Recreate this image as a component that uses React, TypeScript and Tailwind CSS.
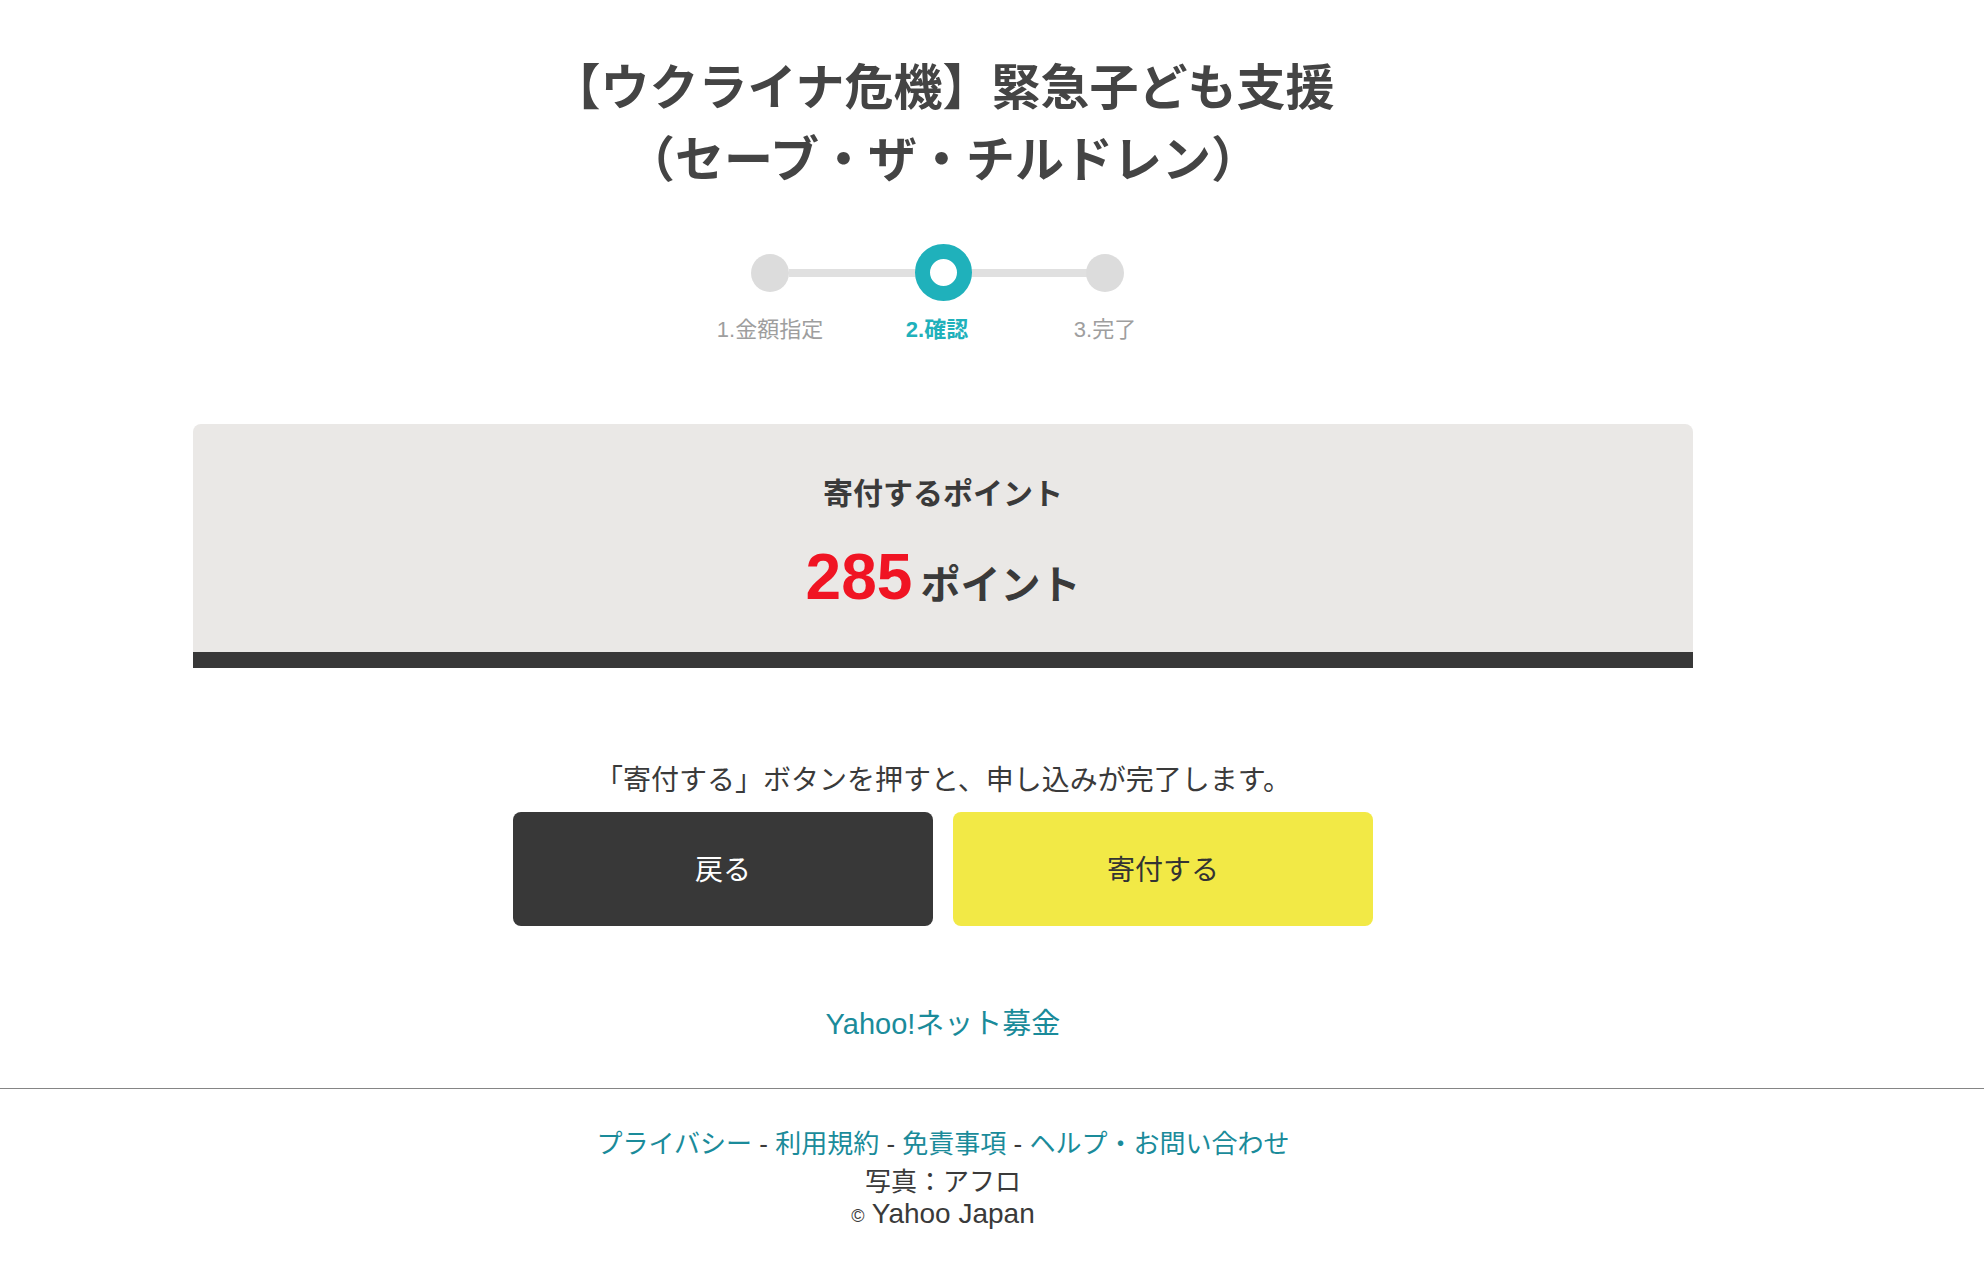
import React from "react";

const steps = [
  { label: "1.金額指定", active: false },
  { label: "2.確認", active: true },
  { label: "3.完了", active: false },
];

function Step({ label, active }: { label: string; active: boolean }) {
  return (
    <div className="flex flex-col items-center w-[57px] relative z-10">
      <div className="h-[57px] w-[57px] flex items-center justify-center">
        {active ? (
          <div className="w-[57px] h-[57px] rounded-full border-[15px] border-[#1fb1bb] bg-white" />
        ) : (
          <div className="w-[38px] h-[38px] rounded-full bg-[#dcdcdc]" />
        )}
      </div>
      <div
        className={
          active
            ? "mt-[14px] mr-[12px] whitespace-nowrap text-[22px] leading-[30px] font-bold text-[#1fb1bb]"
            : "mt-[14px] whitespace-nowrap text-[22px] leading-[30px] text-[#9e9e9e]"
        }
      >
        {label}
      </div>
    </div>
  );
}

export default function App() {
  return (
    <div className="min-h-[1274px] bg-white text-[#3a3a3a] font-['Liberation_Sans','Noto_Sans_CJK_JP',sans-serif]">
      <div className="w-[1886px] flex flex-col items-center">
        {/* TITLE */}
        <h1 className="pt-[52px] text-center text-[49px] leading-[72px] font-bold text-[#444]">
          <div>【ウクライナ危機】緊急子ども支援</div>
          <div>（セーブ・ザ・チルドレン）</div>
        </h1>

        {/* STEPPER */}
        <div className="mt-[48px] ml-[-11px] flex items-start">
          <Step {...steps[0]} />
          <div className="mt-[24.5px] -mx-[10px] w-[136px] h-[8px] bg-[#e0e0e0]" />
          <Step {...steps[1]} />
          <div className="mt-[24.5px] -mx-[10px] w-[125px] h-[8px] bg-[#e0e0e0]" />
          <Step {...steps[2]} />
        </div>

        {/* POINT CARD */}
        <div className="mt-[79px] w-[1500px] rounded-t-[8px] overflow-hidden">
          <div className="h-[228px] bg-[#eae8e6] flex flex-col items-center pt-[50px]">
            <p className="text-[30px] leading-[40px] font-bold text-[#3a3a3a]">
              寄付するポイント
            </p>
            <p className="mt-[31px] flex items-baseline font-bold">
              <span className="text-[64px] leading-[64px] text-[#f01423]">285</span>
              <span className="ml-[8px] text-[40px] leading-[64px] text-[#3a3a3a]">
                ポイント
              </span>
            </p>
          </div>
          <div className="h-[16px] bg-[#383838]" />
        </div>

        {/* NOTICE + BUTTONS */}
        <p className="mt-[95px] text-[28px] leading-[36px] text-[#3a3a3a]">
          「寄付する」ボタンを押すと、申し込みが完了します。
        </p>
        <div className="mt-[13px] flex gap-[20px]">
          <button className="w-[420px] h-[114px] rounded-[8px] bg-[#383838] text-white text-[28px] pt-[4px]">
            戻る
          </button>
          <button className="w-[420px] h-[114px] rounded-[8px] bg-[#f2e946] text-[#333] text-[28px] pt-[4px]">
            寄付する
          </button>
        </div>

        <a className="mt-[78px] text-[29px] leading-[40px] text-[#1a8b9a]">
          Yahoo!ネット募金
        </a>
      </div>

      <div className="mt-[44px] h-px bg-[#858585]" />

      {/* FOOTER */}
      <div className="w-[1886px] flex flex-col items-center text-[26px]">
        <p className="mt-[36px] leading-[38px] text-[#3a3a3a]">
          <a className="text-[#1a8b9a]">プライバシー</a> - <a className="text-[#1a8b9a]">利用規約</a> -{" "}
          <a className="text-[#1a8b9a]">免責事項</a> - <a className="text-[#1a8b9a]">ヘルプ・お問い合わせ</a>
        </p>
        <p className="mt-[3px] leading-[32px]">写真：アフロ</p>
        <p className="leading-[32px] text-[28px]">
          <span className="text-[18px] align-middle">©</span> Yahoo Japan
        </p>
      </div>
    </div>
  );
}
